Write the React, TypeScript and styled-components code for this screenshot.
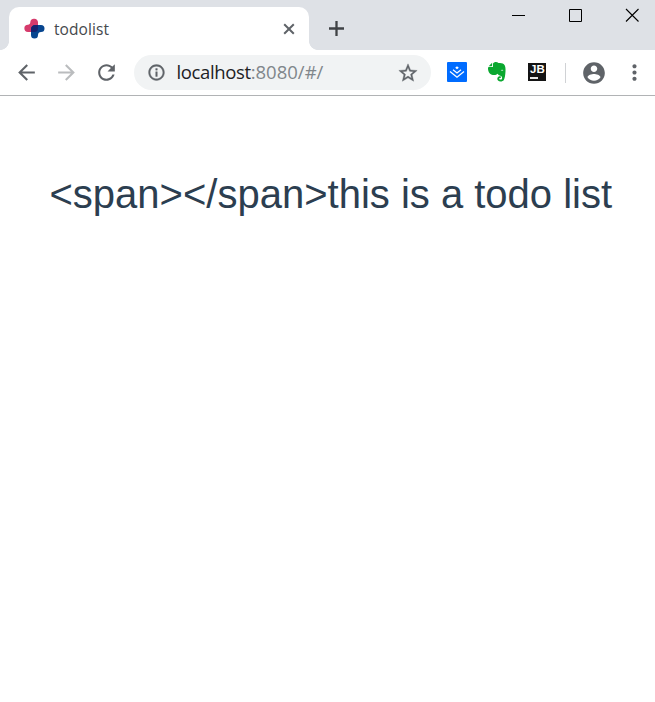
import React from "react";
import styled, { createGlobalStyle } from "styled-components";

const GlobalStyle = createGlobalStyle`
  * { box-sizing: border-box; }
  html, body { margin: 0; background: #fff; }
  svg { display: block; flex: none; }
`;

const Window = styled.div`
  display: flex;
  flex-direction: column;
  width: 655px;
  height: 702px;
  overflow: hidden;
  background: #fff;
  font-family: "Open Sans", "Noto Sans", sans-serif;
`;

const TabStrip = styled.header`
  display: flex;
  align-items: flex-start;
  height: 50px;
  flex: none;
  background: #dee1e6;
`;

const TabEdge = styled.div<{ $side: "left" | "right" }>`
  align-self: flex-end;
  width: 9px;
  height: 9px;
  background: radial-gradient(
    circle at ${(p) => (p.$side === "left" ? "0 0" : "100% 0")},
    #dee1e6 8.6px,
    #fff 9.3px
  );
`;

const Tab = styled.div`
  display: flex;
  align-items: center;
  width: 300px;
  height: 43px;
  margin-top: 7px;
  padding: 0 13px 0 14.5px;
  border-radius: 10px 10px 0 0;
  background: #fff;
`;

const TabTitle = styled.span`
  flex: 1;
  margin-left: 9.5px;
  color: #45494d;
  font-size: 15.5px;
  line-height: 22px;
  letter-spacing: 0.08px;
`;

const NewTab = styled.button`
  margin: 20px 0 0 10px;
  padding: 0;
  border: 0;
  background: none;
`;

const WindowControls = styled.div`
  display: flex;
  align-items: center;
  gap: 43px;
  margin: 8px 16px 0 auto;
`;

const Toolbar = styled.nav`
  display: flex;
  align-items: center;
  height: 46px;
  flex: none;
  padding: 0 8px 0 14px;
  border-bottom: 1px solid #b1b3b5;
`;

const NavButtons = styled.div`
  display: flex;
  gap: 15px;
  width: 120px;
`;

const AddressBar = styled.div`
  display: flex;
  align-items: center;
  width: 297px;
  height: 35px;
  padding: 0 12px 0 13px;
  border-radius: 18px;
  background: #f1f3f4;
`;

const Url = styled.span`
  flex: 1;
  margin: 0 0 2px 10.5px;
  color: #202124;
  font-size: 18.5px;
  line-height: 26px;
  letter-spacing: -0.37px;
`;

const UrlRest = styled.span`
  color: #80868b;
  letter-spacing: 0;
`;

const Extensions = styled.div`
  display: flex;
  align-items: center;
  gap: 20px;
  margin: 0 0 1px 16px;
`;

const JetBrainsTile = styled.div`
  display: flex;
  flex-direction: column;
  width: 18px;
  height: 18px;
  margin-left: 1px;
  padding: 1px 0 0 2px;
  background: #141414;
  color: #fff;
  font: bold 11.5px/10px "Liberation Sans", sans-serif;
`;

const TileBar = styled.div`
  width: 8px;
  height: 2px;
  margin-top: 3px;
  background: #e8e8e8;
`;

const Divider = styled.div`
  width: 1px;
  height: 20px;
  margin: 0 15px 0 19px;
  background: #d0d2d5;
`;

const Menu = styled.div`
  margin-left: auto;
`;

const Page = styled.main`
  flex: 1;
  padding: 75px 0 0 49.5px;
`;

const Heading = styled.h1`
  margin: 0;
  color: #2c3e50;
  font: 400 40px/46px "Liberation Sans", Arial, sans-serif;
  white-space: nowrap;
`;

const Icon = ({
  d,
  size = 25,
  color = "#5f6368",
  weight = 0,
}: {
  d: string;
  size?: number;
  color?: string;
  weight?: number;
}) => (
  <svg width={size} height={size} viewBox="0 0 24 24" fill={color} stroke={color} strokeWidth={weight}>
    <path d={d} />
  </svg>
);

const Favicon = () => (
  <svg width="21" height="21" viewBox="0 0 21 21">
    <path
      d="M10.3 .7A3.5 3.5 0 0 0 6.3 4.2C6.3 5.6 5.4 6.4 4 6.7A3.6 3.6 0 0 0 4 14H7.5L14 10V4.2A3.5 3.5 0 0 0 10.3 .7Z"
      fill="#d63b6c"
    />
    <path
      d="M17 7H11.5C8.5 7 7 8.7 7 11V17A3.5 3.5 0 0 0 14 17C14.2 15 15 14 17 14A3.5 3.5 0 0 0 17 7Z"
      fill="#07458f"
    />
    <path d="M11.5 7H14V10.5C14 13 12.5 14 10 14H7V11C7 8.7 8.5 7 11.5 7Z" fill="#14236f" />
  </svg>
);

const BlueTile = () => (
  <svg width="20" height="20" viewBox="0 0 20 20">
    <rect width="20" height="20" rx="1" fill="#006cff" />
    <path d="M10 4.3l1.8 1.5L10 7.3 8.2 5.8Z" fill="#fff" />
    <path d="M6 7.8l4 3.2 4-3.2M3 9.6l7 5.6 7-5.6" fill="none" stroke="#fff" strokeWidth="1.3" />
  </svg>
);

const Elephant = () => (
  <svg width="20" height="22" viewBox="0 0 20 22">
    <path
      d="M7.2 1.5C8.5.8 10.4 1 11.5 2.1C13.4 2.2 15.6 2.3 16.9 3.2C18.4 4.5 18.7 7.5 18.5 10.5C18.3 14 17.8 17.5 16.8 19C15.7 20.8 12.4 21 11 19.5C9.8 18.2 10.2 16.1 11.7 15.5C12.5 15.2 13.4 15.3 13.8 15.5V17.1C12.6 16.9 12 17.4 12.3 18.1C12.8 19 14.8 18.7 15.1 17.4C15.3 16 14.6 14.7 12.8 14.4C11.6 14.2 11 13.6 10.6 12.8C9.5 14.2 7 14.3 4.8 13.8C2.2 13.1 1 9.8 1 7.3C1 6.5 1.4 6.1 2.2 6.1H5.1C5.7 6.1 6 5.8 6 5.2V2.7C6 2.1 6.5 1.7 7.2 1.5Z"
      fill="#0aa82f"
    />
    <path d="M1.7 5.2L5.1 1.8V4.6C5.1 5 4.9 5.2 4.5 5.2Z" fill="#0aa82f" />
    <path d="M13.8 9.7C14.1 8.5 16 8.4 16.3 10C15.4 9.6 14.7 9.5 13.8 9.7Z" fill="#fff" />
  </svg>
);

export default function App() {
  return (
    <Window>
      <GlobalStyle />
      <TabStrip>
        <TabEdge $side="left" />
        <Tab>
          <Favicon />
          <TabTitle>todolist</TabTitle>
          <svg width="14" height="14" viewBox="0 0 14 14">
            <path d="M2.2 2.2l9.6 9.6M11.8 2.2l-9.6 9.6" stroke="#5f6368" strokeWidth="2" />
          </svg>
        </Tab>
        <TabEdge $side="right" />
        <NewTab aria-label="New tab">
          <svg width="17" height="17" viewBox="0 0 17 17">
            <path d="M8.5 1v15M1 8.5h15" stroke="#3f4246" strokeWidth="2.3" />
          </svg>
        </NewTab>
        <WindowControls>
          <svg width="14" height="14" viewBox="0 0 14 14">
            <path d="M1 7.5h13" stroke="#000" />
          </svg>
          <svg width="14" height="14" viewBox="0 0 14 14">
            <path d="M1.5 1.5h12v12h-12z" fill="none" stroke="#000" />
          </svg>
          <svg width="14" height="14" viewBox="0 0 14 14">
            <path d="M1 1l12.5 12.5M13.5 1L1 13.5" stroke="#000" strokeWidth="1.1" />
          </svg>
        </WindowControls>
      </TabStrip>
      <Toolbar>
        <NavButtons>
          <Icon d="M20 11H7.83l5.59-5.59L12 4l-8 8 8 8 1.41-1.41L7.83 13H20v-2z" />
          <Icon color="#babcbe" d="M12 4l-1.41 1.41L16.17 11H4v2h12.17l-5.58 5.59L12 20l8-8z" />
          <Icon d="M17.65 6.35C16.2 4.9 14.21 4 12 4c-4.42 0-7.99 3.58-7.99 8s3.57 8 7.99 8c3.73 0 6.84-2.55 7.73-6h-2.08c-.82 2.33-3.04 4-5.65 4-3.31 0-6-2.69-6-6s2.69-6 6-6c1.66 0 3.14.69 4.22 1.78L13 11h7V4l-2.35 2.35z" />
        </NavButtons>
        <AddressBar>
          <Icon
            size={19}
            weight={0.5}
            d="M11 7h2v2h-2zm0 4h2v6h-2zm1-9C6.48 2 2 6.48 2 12s4.48 10 10 10 10-4.48 10-10S17.52 2 12 2zm0 18c-4.41 0-8-3.59-8-8s3.59-8 8-8 8 3.59 8 8-3.59 8-8 8z"
          />
          <Url>
            localhost<UrlRest>:8080/#/</UrlRest>
          </Url>
          <Icon
            size={22}
            weight={0.4}
            d="M22 9.24l-7.19-.62L12 2 9.19 8.63 2 9.24l5.46 4.73L5.82 21 12 17.27 18.18 21l-1.63-7.03L22 9.24zM12 15.4l-3.76 2.27 1-4.28-3.32-2.88 4.38-.38L12 6.1l1.71 4.04 4.38.38-3.32 2.88 1 4.28L12 15.4z"
          />
        </AddressBar>
        <Extensions>
          <BlueTile />
          <Elephant />
          <JetBrainsTile>
            JB
            <TileBar />
          </JetBrainsTile>
        </Extensions>
        <Divider />
        <Icon
          size={26}
          d="M12 2C6.48 2 2 6.48 2 12s4.48 10 10 10 10-4.48 10-10S17.52 2 12 2zm0 3c1.66 0 3 1.34 3 3s-1.34 3-3 3-3-1.34-3-3 1.34-3 3-3zm0 14.2c-2.5 0-4.71-1.28-6-3.22.03-1.99 4-3.08 6-3.08 1.99 0 5.97 1.09 6 3.08-1.29 1.94-3.5 3.22-6 3.22z"
        />
        <Menu>
          <Icon d="M12 8c1.1 0 2-.9 2-2s-.9-2-2-2-2 .9-2 2 .9 2 2 2zm0 2c-1.1 0-2 .9-2 2s.9 2 2 2 2-.9 2-2-.9-2-2-2zm0 6c-1.1 0-2 .9-2 2s.9 2 2 2 2-.9 2-2-.9-2-2-2z" />
        </Menu>
      </Toolbar>
      <Page>
        <Heading>{"<span></span>this is a todo list"}</Heading>
      </Page>
    </Window>
  );
}
